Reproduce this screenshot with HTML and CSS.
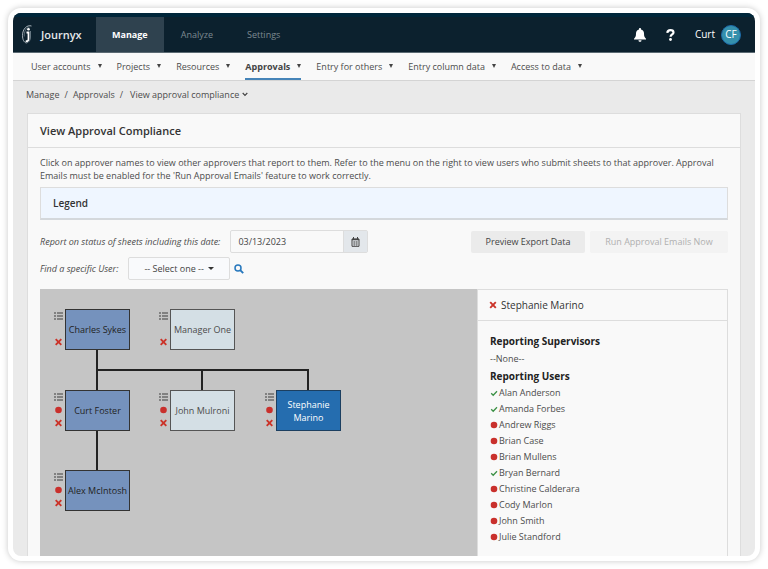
FILE: index.html
```html
<!DOCTYPE html>
<html lang="en">
<head>
    <meta charset="UTF-8">
    <meta name="viewport" content="width=device-width, initial-scale=1.0">
    <title>Journyx - View Approval Compliance</title>
    <link rel="stylesheet" href="styles.css">
</head>
<body>
    <svg class="sprite" aria-hidden="true">
        <symbol id="list" viewBox="0 0 9 8"><path d="M0 1h2M3 1h6M0 4h2M3 4h6M0 7h2M3 7h6" stroke="#6b6b6b" stroke-width="1.3"/></symbol>
        <symbol id="cross" viewBox="0 0 8 8"><path d="M1.2 1.2l5.6 5.6M6.8 1.2L1.2 6.8" stroke="#cb3329" stroke-width="1.9"/></symbol>
        <symbol id="dot" viewBox="0 0 8 8"><circle cx="4" cy="4" r="3.3" fill="#c9302c"/></symbol>
        <symbol id="check" viewBox="0 0 8 8"><path d="M1.2 4.2l2 2 3.8-4" fill="none" stroke="#3c9146" stroke-width="1.3"/></symbol>
    </svg>
    <div class="frame">
        <div class="app">
            <header class="topbar">
                <a class="brand" href="#">
                    <svg width="12" height="22" viewBox="0 0 12 22" fill="none">
                        <path d="M10.500 2C6 .5 1.500 5 1.500 11.500c0 4 1.500 7 4 7.500" stroke="#a9b4bb" stroke-width="1"/>
                        <path d="M8.500 3C5 3.500 3 8 3.200 12.500" stroke="#7f8f99" stroke-width=".7"/>
                        <circle cx="7.500" cy="5.300" r="1.300" fill="#fff"/>
                        <path d="M5.500 8.500h2v6.500c0 1.800-1 2.500-2.800 2.200" stroke="#fff" stroke-width="1.800"/>
                        <path d="M9.500 7v6c0 3-1.500 5.500-4 6" stroke="#7f8f99" stroke-width=".8"/>
                    </svg>
                    <span>Journyx</span>
                </a>
                <nav class="tabs">
                    <a class="tab active" href="#">Manage</a>
                    <a class="tab" href="#">Analyze</a>
                    <a class="tab" href="#">Settings</a>
                </nav>
                <div class="tools">
                    <button class="icon-btn" aria-label="Notifications">
                        <svg width="12" height="14" viewBox="0 0 12 14" fill="#fff"><path d="M6 0c.6 0 1 .4 1 1v.5c2 .4 3 2 3 4 0 3 .7 4 2 5.200V11.500H0v-.8C1.300 9.500 2 8.500 2 5.500c0-2 1-3.600 3-4V1c0-.6.4-1 1-1zM4.500 12.200h3c0 1-.6 1.500-1.500 1.500s-1.500-.5-1.500-1.500z"/></svg>
                    </button>
                    <button class="icon-btn" aria-label="Help">
                        <svg width="9" height="12" viewBox="0 0 9 12" fill="none"><path d="M1.300 3.800C1.500 2 2.800 1.200 4.400 1.200c1.900 0 3.100 1 3.100 2.300 0 2-2.900 2-2.900 4.300" stroke="#fff" stroke-width="2.200"/><circle cx="4.500" cy="10.500" r="1.400" fill="#fff"/></svg>
                    </button>
                    <a class="user" href="#">Curt <span class="avatar">CF</span></a>
                </div>
            </header>
            <nav class="subnav">
                <a class="menu" href="#">User accounts</a>
                <a class="menu" href="#">Projects</a>
                <a class="menu" href="#">Resources</a>
                <a class="menu current" href="#">Approvals</a>
                <a class="menu" href="#">Entry for others</a>
                <a class="menu" href="#">Entry column data</a>
                <a class="menu" href="#">Access to data</a>
            </nav>
            <div class="breadcrumb">
                <a href="#">Manage</a><span>/</span><a href="#">Approvals</a><span>/</span>
                <a class="here" href="#">View approval compliance
                    <svg width="6" height="5" viewBox="0 0 6 5" fill="none"><path d="M.7 1L3 3.300 5.300 1" stroke="#444" stroke-width="1.200"/></svg>
                </a>
            </div>
            <main class="panel">
                <h1>View Approval Compliance</h1>
                <div class="panel-body">
                    <p>Click on approver names to view other approvers that report to them. Refer to the menu on the right to view users who submit sheets to that approver. Approval Emails must be enabled for the 'Run Approval Emails' feature to work correctly.</p>
                    <button class="legend">Legend</button>
                    <div class="row">
                        <label for="date">Report on status of sheets including this date:</label>
                        <div class="date">
                            <input id="date" type="text" value="03/13/2023">
                            <button aria-label="Open calendar">
                                <svg width="9" height="10" viewBox="0 0 9 10" fill="none" stroke="#444"><path d="M1 2h7v7.300H1z"/><path d="M1 2.500h7" stroke-width="1.500"/><path d="M2.500 0v2M6.500 0v2"/><path d="M2 5h5M2 7h5M3.300 4v5M5.700 4v5" stroke-width=".5"/></svg>
                            </button>
                        </div>
                        <div class="actions">
                            <button class="btn">Preview Export Data</button>
                            <button class="btn run" disabled>Run Approval Emails Now</button>
                        </div>
                    </div>
                    <div class="row">
                        <label for="user">Find a specific User:</label>
                        <div class="select">
                            <select id="user"><option>-- Select one --</option></select>
                        </div>
                        <button class="search" aria-label="Search">
                            <svg width="10" height="10" viewBox="0 0 10 10" fill="none" stroke="#2778bd"><circle cx="4" cy="4" r="3" stroke-width="1.500"/><path d="M6.200 6.200L9.200 9.200" stroke-width="1.900"/></svg>
                        </button>
                    </div>
                    <div class="report">
                        <div class="chart">
                            <svg class="lines" width="330" height="190" fill="none" stroke="#222" stroke-width="2"><path d="M57 60v42M57 81h211v21M162 81v21M57 141v41"/></svg>
                            <div class="node sykes">
                                <div class="marks"><svg><use href="#list"/></svg><svg><use href="#cross"/></svg></div>
                                <button class="blue">Charles Sykes</button>
                            </div>
                            <div class="node manager">
                                <div class="marks"><svg><use href="#list"/></svg><svg><use href="#cross"/></svg></div>
                                <button>Manager One</button>
                            </div>
                            <div class="node foster">
                                <div class="marks"><svg><use href="#list"/></svg><svg><use href="#dot"/></svg><svg><use href="#cross"/></svg></div>
                                <button class="blue">Curt Foster</button>
                            </div>
                            <div class="node mulroni">
                                <div class="marks"><svg><use href="#list"/></svg><svg><use href="#dot"/></svg><svg><use href="#cross"/></svg></div>
                                <button>John Mulroni</button>
                            </div>
                            <div class="node marino">
                                <div class="marks"><svg><use href="#list"/></svg><svg><use href="#dot"/></svg><svg><use href="#cross"/></svg></div>
                                <button class="selected">Stephanie Marino</button>
                            </div>
                            <div class="node mcintosh">
                                <div class="marks"><svg><use href="#list"/></svg><svg><use href="#dot"/></svg><svg><use href="#cross"/></svg></div>
                                <button class="blue">Alex McIntosh</button>
                            </div>
                        </div>
                        <aside class="details">
                            <h2><svg><use href="#cross"/></svg>Stephanie Marino</h2>
                            <div class="details-body">
                                <h3>Reporting Supervisors</h3>
                                <div class="none">--None--</div>
                                <h3>Reporting Users</h3>
                                <ul>
                                    <li><svg><use href="#check"/></svg>Alan Anderson</li>
                                    <li><svg><use href="#check"/></svg>Amanda Forbes</li>
                                    <li><svg><use href="#dot"/></svg>Andrew Riggs</li>
                                    <li><svg><use href="#dot"/></svg>Brian Case</li>
                                    <li><svg><use href="#dot"/></svg>Brian Mullens</li>
                                    <li><svg><use href="#check"/></svg>Bryan Bernard</li>
                                    <li><svg><use href="#dot"/></svg>Christine Calderara</li>
                                    <li><svg><use href="#dot"/></svg>Cody Marlon</li>
                                    <li><svg><use href="#dot"/></svg>John Smith</li>
                                    <li><svg><use href="#dot"/></svg>Julie Standford</li>
                                </ul>
                            </div>
                        </aside>
                    </div>
                </div>
            </main>
        </div>
    </div>
</body>
</html>
```
FILE: styles.css
```css
* { box-sizing: border-box; margin: 0; padding: 0; }
body {
    padding: 8px; background: #fff; color: #4c4c4c;
    font-family: "Open Sans", "Noto Sans", sans-serif; font-size: 9px; line-height: 13px;
}
a { color: inherit; text-decoration: none; }
button, input, select { font: inherit; color: inherit; border: none; background: none; }
button { cursor: pointer; }
svg { flex: none; display: block; }
.sprite { display: none; }

.frame {
    height: calc(100vh - 16px); padding: 5px; border-radius: 13px;
    background: #fff; box-shadow: 0 0 6px rgba(0,0,0,0.22);
}
.app {
    height: 100%; overflow: hidden; border-radius: 8px; background: #eaeaea;
    display: flex; flex-direction: column;
}

/* top bar */
.topbar {
    height: 40px; flex: none; display: flex; padding-right: 14px;
    background: #0c212e; color: #fff; border-top: 4px solid #00263a; border-bottom: 1px solid #5b6a73;
}
.brand { width: 83px; padding-left: 8px; display: flex; align-items: center; gap: 8px; font-size: 11px; font-weight: 600; color: #e4e8ea; }
.tabs { display: flex; }
.tab { padding: 0 17px; display: flex; align-items: center; color: #7c8990; }
.tab.active { padding: 0 16px; background: #2f424f; color: #fff; font-weight: 700; }
.tools { margin-left: auto; display: flex; align-items: center; gap: 20px; }
.user { display: flex; align-items: center; gap: 6px; font-size: 10px; }
.avatar {
    width: 20px; height: 20px; border-radius: 50%; border: 1px solid #1c6aa8;
    background: #3590ac; display: flex; align-items: center; justify-content: center;
}

/* menu bar */
.subnav {
    height: 28px; flex: none; display: flex; gap: 15px; padding-left: 18px;
    background: #f9f9f9; border-bottom: 1px solid #d4d4d4;
}
.menu { display: flex; align-items: center; gap: 7px; white-space: nowrap; padding-top: 1px; border-bottom: 2px solid transparent; }
.menu::after { content: ""; border: 2px solid transparent; border-top: 4px solid #444; border-bottom: none; }
.menu.current { font-weight: 700; color: #444; border-bottom-color: #4584b8; }

.breadcrumb { height: 32px; flex: none; display: flex; align-items: center; gap: 5px; padding: 0 13px 5px; }
.here { display: flex; align-items: center; gap: 3px; margin-left: 2px; }

/* panel */
.panel {
    flex: 1; min-height: 0; margin: 0 14px; display: flex; flex-direction: column;
    background: #f9f9f9; border: 1px solid #ddd; border-bottom: none;
}
h1 { padding: 10px 12px; font-size: 11px; line-height: 13px; font-weight: 600; color: #333; border-bottom: 1px solid #ddd; }
.panel-body { flex: 1; min-height: 0; display: flex; flex-direction: column; padding: 8px 12px 0; }
.legend {
    height: 33px; flex: none; margin: 5px 0 10px; padding-left: 12px; text-align: left;
    background: #eff6ff; border: 1px solid #ddd; border-bottom: 2px solid #d4d8dc;
    font-size: 10px; font-weight: 600; color: #333;
}
.row { display: flex; align-items: center; gap: 4px; margin-bottom: 4px; }
.row label { margin-right: 3px; font-style: italic; }
.date { display: flex; height: 23px; width: 138px; margin-left: 3px; border: 1px solid #ddd; border-radius: 2px; }
.date input { flex: 1; min-width: 0; padding: 0 7px; color: #444; }
.date button { width: 24px; background: #e3e7eb; border-left: 1px solid #ddd; display: flex; align-items: center; justify-content: center; }
.actions { margin-left: auto; display: flex; gap: 5px; }
.btn { height: 22px; width: 114px; background: #ebebeb; border-radius: 2px; color: #444; }
.btn.run { width: 138px; background: #f3f3f3; color: #b0b0b0; }
.select { position: relative; margin-left: 3px; }
.select::after {
    content: ""; position: absolute; right: 16px; top: 10px; pointer-events: none;
    border: 3px solid transparent; border-top-color: #333; border-bottom: none;
}
.select select {
    display: block; appearance: none; width: 102px; height: 23px; padding-left: 15px; color: #444;
    background: #f9fafc; border: 1px solid #ddd; border-radius: 2px;
}

/* report */
.report { flex: 1; min-height: 0; margin-top: 5px; display: flex; }
.chart { position: relative; flex: 1; background: #c5c5c5; overflow: hidden; }
.lines { position: absolute; left: 0; top: 0; }
.node { position: absolute; display: flex; gap: 2px; height: 41px; }
.sykes { left: 14px; top: 20px; }
.manager { left: 119px; top: 20px; }
.foster { left: 14px; top: 101px; }
.mulroni { left: 119px; top: 101px; }
.marino { left: 225px; top: 101px; }
.mcintosh { left: 14px; top: 181px; }
.marks { display: flex; flex-direction: column; justify-content: space-between; padding: 3px 0 4px; }
.marks svg { width: 9px; height: 8px; }
.node button { width: 65px; background: #d4dfe5; border: 1px solid #555; }
.node .blue { background: #7592bd; border-color: #333; color: #222; }
.node .selected { padding: 0 8px; background: #256daf; border-color: #1c3f60; color: #fff; }

.details { width: 251px; border: 1px solid #ddd; border-bottom: none; }
h2 {
    display: flex; align-items: center; gap: 4px; height: 31px; padding-left: 11px;
    font-size: 10px; font-weight: 400; color: #333; border-bottom: 1px solid #ddd;
}
h2 svg, li svg { width: 8px; height: 8px; }
.details-body { padding: 12px 12px 0; }
h3 { font-size: 10px; line-height: 16px; font-weight: 700; color: #222; }
.none { line-height: 19px; }
ul { list-style: none; padding-top: 1px; }
li { display: flex; align-items: center; gap: 1px; line-height: 16px; }
```
